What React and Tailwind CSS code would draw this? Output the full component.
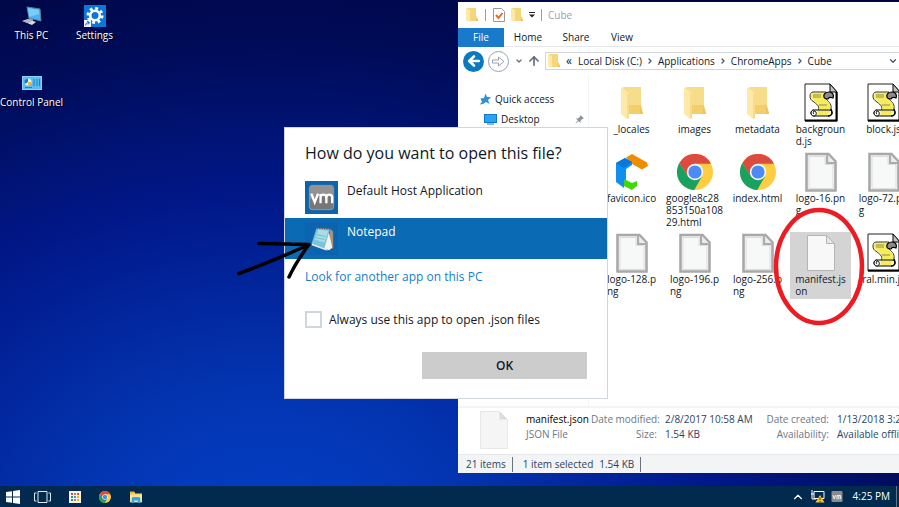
import {
  ArrowLeft,
  ArrowUp,
  ChevronDown,
  ChevronRight,
  ChevronUp,
} from "lucide-react";

function FolderIcon({ className }) {
  return (
    <svg viewBox="0 0 24 34" className={className}>
      <path d="M3 1h18v18l2 8v1H3z" fill="#f3cf6c" />
      <path d="M3 1h18v18H5z" fill="#f7dc8a" />
      <path d="M20 19l3 9h-3z" fill="#eec45a" />
      <path d="M1 1l8 6v25l-2 1-6-5z" fill="#ffe9a9" />
      <path d="M9 7v25l-2 1V8z" fill="#f8dc8c" />
    </svg>
  );
}

function SmallFolderIcon({ className }) {
  return (
    <svg viewBox="0 0 12 14" className={className}>
      <path d="M1 0h9v9l2 3v1H1z" fill="#f6d67c" />
      <path d="M10 8l2 4v1h-2z" fill="#ecc25a" />
      <path d="M0 0l4 2v11l-1 1-3-2z" fill="#ffe9a9" />
    </svg>
  );
}

function ScriptIcon({ className }) {
  return (
    <svg viewBox="0 0 34 39" className={className}>
      <path d="M1 1h25l7 8v29H1z" fill="#fff" stroke="#222" />
      <path d="M32.500 9v28.500H1" fill="none" stroke="#000" strokeWidth="2" />
      <path d="M26 1v8h7z" fill="#c4c4c4" stroke="#000" />
      <path
        d="M9 9h13c-2 2-3 4-1 6 3 3 7 6 6 10 0 2-1 3-2 4l-11-1c2-4 0-6-4-9-3-2-4-3-4-6 0-2 1-4 3-4z"
        fill="#fdf9a8"
        stroke="#333"
        strokeWidth="1"
      />
      <path
        d="M8 11h12M7 13h12M8 15h12M10 17h12M12 19h12M14 21h12M15 23h11M15 25h11"
        stroke="#f0de10"
        strokeWidth="1.200"
      />
      <path d="M9 12h8M9 14h8M15 22h8" stroke="#7a7440" strokeWidth=".8" />
      <path d="M20 14c-1-3 2-5 5-5 4 0 5 3 4 6-2-1-4-1-5 1-2 0-4-1-4-2z" fill="#8b8b8b" stroke="#000" strokeWidth="1.200" />
      <path d="M10 27h15c4 0 4 6 0 6H10c-4 0-4-6 0-6z" fill="#fdf9a8" stroke="#000" />
      <path d="M14 29h11M14 31h10" stroke="#f0de10" strokeWidth="1.200" />
      <path d="M10 27c-4 0-4 6 0 6 3 0 3-5 0-5-1 0-1 3 0 3" fill="#fff" stroke="#000" />
      <path d="M24 33c4 0 5-3 3-7" fill="none" stroke="#000" strokeWidth="1.500" />
    </svg>
  );
}

function ImageFileIcon({ className }) {
  return (
    <svg viewBox="0 0 34 40" className={className}>
      <path d="M2.500 2h22l7 7.500v29h-29z" fill="#f7f8f8" stroke="#a8a8a8" strokeWidth="2.600" />
      <path d="M23 2v9h8.500" fill="#ececec" stroke="#acacac" strokeWidth="2.200" />
      <path d="M5 4.500h16v8h8v24H5z" fill="none" stroke="#dcdcdc" />
    </svg>
  );
}

function BlankFileIcon({ className }) {
  return (
    <svg viewBox="0 0 28 36" className={className}>
      <path d="M.5.5h19l8 8v27H.5z" fill="#f8f8f8" stroke="#b4b4b4" />
      <path d="M19.500.5v8h8z" fill="#e6e6e6" stroke="#b4b4b4" />
    </svg>
  );
}

function ChromeIcon({ className }) {
  return (
    <svg viewBox="0 0 48 48" className={className}>
      <circle cx="24" cy="24" r="24" fill="#ffcd42" />
      <path d="M24 13h21.400A24 24 0 0 0 3.200 12l11 18z" fill="#dc4b3e" />
      <path d="M3.200 12A24 24 0 0 0 23 48l10.500-18.500L24 34 14.500 30z" fill="#19a15f" />
      <circle cx="24" cy="24" r="11" fill="#f3f6fb" />
      <circle cx="24" cy="24" r="8.800" fill="#4c8bf5" />
    </svg>
  );
}

function CubeIcon({ className }) {
  return (
    <svg viewBox="0 0 34 38" className={className}>
      <path d="M11 4.500l6-3.500 15 8.500 1 3.500-6 3.500-9-5z" fill="#f08c00" />
      <path d="M1 10l9-5 7 4v3l-6 4v11l-2 2v6l-8-6z" fill="#0f8ff0" />
      <path d="M1 10l9-5 7 4-8 6z" fill="#0878dc" />
      <path d="M9 26l8 4 5-2v5l-5 4-8-4z" fill="#3fd80a" />
    </svg>
  );
}

function VmIcon({ className }) {
  return (
    <svg viewBox="0 0 34 34" className={className}>
      <rect width="34" height="34" fill="#0a64b0" />
      <rect x="4.500" y="4.500" width="25" height="25" rx="3" fill="#777" stroke="#9a9a9a" />
      <path d="M5 7q0-2 2-2h20q2 0 2 2v7q-12 0-24 5z" fill="#929292" />
      <path
        d="M6.500 13l3.500 9 3.500-9M16 23v-9.500M16 17q0-3 3-3t3 3v6M22 17q0-3 3-3t3 3v6"
        fill="none"
        stroke="#fff"
        strokeWidth="2.400"
      />
    </svg>
  );
}

function NotepadIcon({ className }) {
  return (
    <svg viewBox="0 0 34 34" className={className}>
      <rect width="34" height="34" fill="#0a64b0" />
      <path d="M26 7l3 3v17l-6 2z" fill="#a8927c" />
      <path d="M24 8l4 18-3 3-6-2z" fill="#f4f2ec" />
      <path d="M12 6l14 1-6 20-13-5z" fill="#7cc4de" />
      <path d="M14 8l10 1-4 12-10-3z" fill="#a8dcea" />
      <path d="M7 22l13 5 4 2-3 0-14-5z" fill="#e8ecec" />
      <path d="M12 6l14 1" stroke="#5d5350" strokeWidth="2" strokeDasharray="1.500 1" />
      <path d="M12 13l9 2M11 16l9 2" stroke="#73bdb0" />
    </svg>
  );
}

function PcIcon({ className }) {
  return (
    <svg viewBox="0 0 22 20" className={className}>
      <path d="M6 1l13 2 1 12-12-3z" fill="#45b4f4" stroke="#5b7f98" />
      <path d="M7 2l11 2v4L8 11z" fill="#78ccfa" />
      <path d="M1 15l6-2 8 3-4 3z" fill="#d6dbe0" />
      <path d="M8 12l4 1v2l-5-1z" fill="#8fa2b0" />
      <path d="M3 15l5 2M5 14l5 2" stroke="#7b858d" strokeWidth=".7" />
    </svg>
  );
}

function SettingsIcon({ className }) {
  return (
    <svg viewBox="0 0 22 22" className={className}>
      <rect width="22" height="22" fill="#0a78d8" />
      <circle cx="11" cy="10.500" r="7" fill="none" stroke="#fff" strokeWidth="3" strokeDasharray="2.750 2.750" />
      <circle cx="11" cy="10.500" r="4.800" fill="none" stroke="#fff" strokeWidth="2.600" />
      <rect y="15" width="7" height="7" fill="#f0f4f8" />
      <path d="M1.500 20.500q0-3 3.500-3M3 16l2.500 1.500L4 19.500" fill="none" stroke="#1569b4" />
    </svg>
  );
}

function ControlPanelIcon({ className }) {
  return (
    <svg viewBox="0 0 20 14" className={className}>
      <rect x=".5" y=".5" width="19" height="13" fill="#58bdf0" stroke="#8fd2f5" />
      <circle cx="6" cy="6" r="3.500" fill="#e8f6fd" />
      <path d="M6 6V2.500A3.500 3.500 0 0 0 3 8z" fill="#1a79c4" />
      <path d="M6 6h3.500A3.500 3.500 0 0 1 6 9.500z" fill="#f0b23c" />
      <path d="M12 3v7M15 3v7M17.500 3v7M3 11.500h7" stroke="#1f80c8" />
    </svg>
  );
}

function ExplorerIcon({ className }) {
  return (
    <svg viewBox="0 0 16 14" className={className}>
      <path d="M1 1h5l1 2h8v10H1z" fill="#f7d774" />
      <path d="M1 1h5l1 2H1z" fill="#e8b93c" />
      <path d="M1 5h14v8H1z" fill="#fce69a" />
      <path d="M3 14V9q0-2 2-2h6q2 0 2 2v5h-3v-3H6v3z" fill="#35a3ea" />
    </svg>
  );
}

const DESKTOP_ITEMS = [
  { name: "This PC", icon: <PcIcon className="h-5 w-6" /> },
  { name: "Settings", icon: <SettingsIcon className="size-[22px]" /> },
  { name: "Control Panel", icon: <ControlPanelIcon className="h-[14px] w-5" /> },
];

const FILES = [
  { name: "_locales", type: "folder" },
  { name: "images", type: "folder" },
  { name: "metadata", type: "folder" },
  { name: "backgroun\nd.js", type: "script" },
  { name: "block.js", type: "script" },
  { name: "favicon.ico", type: "cube" },
  { name: "google8c28\n853150a108\n29.html", type: "chrome" },
  { name: "index.html", type: "chrome" },
  { name: "logo-16.pn\ng", type: "image" },
  { name: "logo-72.pn\ng", type: "image" },
  { name: "logo-128.p\nng", type: "image" },
  { name: "logo-196.p\nng", type: "image" },
  { name: "logo-256.p\nng", type: "image" },
  { name: "manifest.js\non", type: "blank", selected: true },
  { name: "ral.min.js", type: "script" },
];

const FILE_ICONS = {
  folder: <FolderIcon className="h-[34px] w-6" />,
  script: <ScriptIcon className="h-[39px] w-[34px]" />,
  image: <ImageFileIcon className="h-10 w-[34px]" />,
  blank: <BlankFileIcon className="h-9 w-7" />,
  chrome: <ChromeIcon className="size-9" />,
  cube: <CubeIcon className="h-[38px] w-[34px]" />,
};

const PATH = ["Local Disk (C:)", "Applications", "ChromeApps", "Cube"];

function DesktopIcons() {
  return (
    <div className="grid w-[126px] grid-cols-2 gap-y-5 pt-1">
      {DESKTOP_ITEMS.map((item) => (
        <button
          key={item.name}
          className="flex h-[47px] flex-col items-center justify-start whitespace-nowrap text-[10px] leading-4 text-white [text-shadow:1px_1px_1px_#000]"
        >
          <span className="flex h-[23px] items-center justify-center">{item.icon}</span>
          {item.name}
        </button>
      ))}
    </div>
  );
}

function TitleBar() {
  return (
    <header className="flex h-[26px] items-center gap-1.5 pl-2 text-gray-400">
      <SmallFolderIcon className="h-[14px] w-3" />
      <span className="mx-px h-3 w-px bg-gray-400" />
      <svg viewBox="0 0 12 14" className="h-[14px] w-3">
        <path d="M.5.5h8l3 3v10H.5z" fill="#fff" stroke="#999" />
        <path d="M3 7l2.500 3L9.500 5" fill="none" stroke="#e36c2c" strokeWidth="2" />
      </svg>
      <SmallFolderIcon className="h-[14px] w-3" />
      <svg viewBox="0 0 6 6" className="size-[6px]">
        <path d="M0 .5h6" stroke="#222" />
        <path d="M0 2.500h6l-3 3z" fill="#222" />
      </svg>
      <span className="h-3 w-px bg-gray-400" />
      <h1>Cube</h1>
    </header>
  );
}

function AddressBar() {
  return (
    <div className="flex h-7 items-center pl-[5px]">
      <button aria-label="Back" className="flex size-[21px] items-center justify-center rounded-full bg-[#0a7abf] text-white">
        <ArrowLeft className="size-4" strokeWidth={4} />
      </button>
      <button aria-label="Forward" className="ml-1 flex size-[21px] items-center justify-center rounded-full border border-gray-400 text-gray-400">
        <svg viewBox="0 0 13 11" className="h-[11px] w-[13px]" fill="none" stroke="currentColor">
          <path d="M.5 4h6V1L12 5.500 6.500 10V7h-6z" />
        </svg>
      </button>
      <button aria-label="Recent locations" className="ml-1.5 text-gray-500">
        <ChevronDown className="size-2" strokeWidth={4} />
      </button>
      <button aria-label="Up" className="ml-1 text-gray-500">
        <ArrowUp className="size-[14px]" strokeWidth={3} />
      </button>
      <nav className="ml-1 flex h-[18px] flex-1 items-center border border-gray-300 pl-0.5">
        <SmallFolderIcon className="h-[14px] w-3" />
        <span className="mx-1.5 text-xs leading-3">«</span>
        {PATH.map((part, i) => (
          <div key={part} className="flex items-center">
            {i > 0 && <ChevronRight className="mx-1 size-2 text-gray-600" strokeWidth={4} />}
            <button className="whitespace-nowrap">{part}</button>
          </div>
        ))}
        <ChevronDown className="mr-7 ml-auto size-[10px] text-gray-600" strokeWidth={3} />
      </nav>
    </div>
  );
}

function FileGrid() {
  return (
    <ul className="grid content-start grid-cols-[repeat(5,63px)] gap-y-1 pt-[7px] pl-[11px]">
      {FILES.map((file) => (
        <li key={file.name} className="flex items-start justify-center">
          <button
            className={`flex w-[61px] flex-col items-center justify-start ${
              file.selected ? "bg-[#d4d4d4] pb-0.5" : ""
            }`}
          >
            <span className="flex h-[41px] items-center justify-center">
              {FILE_ICONS[file.type]}
            </span>
            <span className="text-left leading-3 whitespace-pre">{file.name}</span>
          </button>
        </li>
      ))}
    </ul>
  );
}

function DetailsPane() {
  return (
    <section className="flex h-12 items-start border-t-2 border-gray-100 pt-[3px] pl-[22px] leading-[15px] whitespace-nowrap text-[#6b7687]">
      <svg viewBox="0 0 28 38" className="h-[38px] w-7 shrink-0">
        <path d="M.5.5h19l8 8v29H.5z" fill="#f5f5f5" stroke="#e8e8e8" />
        <path d="M19.500.5v8h8z" fill="#dcdcdc" />
      </svg>
      <div className="ml-[18px] w-[65px] shrink-0 pt-px">
        <p className="text-black">manifest.json</p>
        <p>JSON File</p>
      </div>
      <dl className="grid shrink-0 grid-cols-[66px_92px_64px_80px] gap-x-2 pt-px">
        <dt className="text-right">Date modified:</dt>
        <dd className="text-[#2a4365]">2/8/2017 10:58 AM</dd>
        <dt className="text-right">Date created:</dt>
        <dd className="text-[#2a4365]">1/13/2018 3:23 PM</dd>
        <dt className="text-right">Size:</dt>
        <dd className="text-[#2a4365]">1.54 KB</dd>
        <dt className="text-right">Availability:</dt>
        <dd className="text-[#2a4365]">Available offline</dd>
      </dl>
    </section>
  );
}

function ExplorerWindow() {
  return (
    <section className="absolute top-0.5 -right-7 bottom-[13px] left-[458px] flex flex-col overflow-hidden bg-white text-[10px] text-gray-900">
      <TitleBar />
      <div className="flex h-[19px] items-center border-b border-gray-200">
        <button className="h-[19px] w-[46px] bg-[#1979ca] text-white">File</button>
        <button className="w-12">Home</button>
        <button className="w-12">Share</button>
        <button className="w-11">View</button>
      </div>
      <AddressBar />
      <div className="flex flex-1">
        <aside className="flex w-[131px] flex-col gap-1 border-r border-gray-100 pt-4 pl-[21px] leading-4">
          <a href="#quick" className="flex items-center gap-1">
            <svg viewBox="0 0 24 24" className="size-3">
              <path d="M13 1l3 7 8 0-6 6 3 8-7-4-6 4-7 1 5-5-3-7 7-1z" fill="#2f8fd8" />
            </svg>
            Quick access
          </a>
          <a href="#desktop" className="flex items-center gap-1 pl-[5px]">
            <svg viewBox="0 0 13 11" className="h-[11px] w-[13px]">
              <rect x=".5" y=".5" width="12" height="8" fill="#29a3f2" stroke="#0f78c8" />
              <path d="M3 10h7" stroke="#0f78c8" />
            </svg>
            Desktop
            <svg viewBox="0 0 10 10" className="mr-1 ml-auto size-[9px]">
              <path d="M6 0l4 4-2 .5L6 7v2L1 4h2l2.500-2zM3 6L0 10l4-3z" fill="#8d959c" />
            </svg>
          </a>
        </aside>
        <FileGrid />
      </div>
      <DetailsPane />
      <footer className="flex h-[19px] items-center gap-1.5 border-t border-gray-200 bg-gray-100 pl-2 text-[#2a4365]">
        <span>21 items</span>
        <span className="h-[15px] w-px bg-gray-500" />
        <span className="ml-1">1 item selected</span>
        <span>1.54 KB</span>
        <span className="h-[15px] w-px bg-gray-500" />
      </footer>
    </section>
  );
}

function OpenWithDialog() {
  return (
    <section
      role="dialog"
      aria-labelledby="open-with-title"
      className="absolute top-[127px] left-[284px] w-[324px] border border-gray-300 bg-white pb-[19px] text-xs text-gray-900"
    >
      <h2 id="open-with-title" className="px-5 pt-[13px] pb-3 text-base leading-6">
        How do you want to open this file?
      </h2>
      <button className="flex h-[41px] w-full items-center gap-[9px] px-5">
        <VmIcon className="size-[33px]" />
        <span className="pb-[14px]">Default Host Application</span>
      </button>
      <button className="flex h-[41px] w-full items-center gap-[9px] bg-[#0a6ab4] px-5 text-white">
        <NotepadIcon className="size-[33px]" />
        <span className="pb-[14px]">Notepad</span>
      </button>
      <div className="flex flex-col items-start px-5 pt-2">
        <a href="#more" className="leading-5 text-[#1480d0]">
          Look for another app on this PC
        </a>
        <label className="mt-6 flex items-center gap-[7px]">
          <input type="checkbox" className="size-[17px] appearance-none border-2 border-gray-300 bg-white" />
          Always use this app to open .json files
        </label>
        <button className="mt-6 h-[27px] w-[165px] self-end bg-[#cccccc] font-semibold">OK</button>
      </div>
    </section>
  );
}

function Taskbar() {
  return (
    <footer className="flex h-[21px] items-center bg-[#012a4e] px-1.5 text-[10px] text-white">
      <div className="flex items-center gap-[18px]">
        <button aria-label="Start">
          <svg viewBox="0 0 14 14" className="size-[14px]" fill="#fff">
            <path d="M0 2l6-.8v5.300H0zM7 1l7-1v6.500H7zM0 7.500h6v5.300L0 12zM7 7.500h7V14l-7-1z" />
          </svg>
        </button>
        <button aria-label="Task View" className="-ml-1">
          <svg viewBox="0 0 17 12" className="h-3 w-[17px]" fill="none" stroke="#dfe8f0">
            <path d="M4 .5h9v11H4zM2.500 2H.5v8h2M14.500 2h2v8h-2" />
          </svg>
        </button>
        <button aria-label="Apps">
          <svg viewBox="0 0 12 12" className="size-3">
            <rect width="12" height="12" fill="#f5f3ee" />
            <path d="M2 3h2M8 3h2" stroke="#dc4b3e" strokeWidth="2" />
            <path d="M5 3h2M5 9h2" stroke="#e27050" strokeWidth="2" />
            <path d="M2 6h2M2 9h2" stroke="#19a15f" strokeWidth="2" />
            <path d="M5 6h2" stroke="#4c8bf5" strokeWidth="2" />
            <path d="M8 6h2M8 9h2" stroke="#f2b90c" strokeWidth="2" />
          </svg>
        </button>
        <button aria-label="Chrome">
          <ChromeIcon className="size-3" />
        </button>
        <button aria-label="File Explorer">
          <ExplorerIcon className="h-3 w-[14px]" />
        </button>
      </div>
      <div className="ml-auto flex items-center gap-1.5">
        <button aria-label="Show hidden icons">
          <ChevronUp className="size-[14px]" strokeWidth={2} />
        </button>
        <svg viewBox="0 0 14 13" className="h-[13px] w-[14px]">
          <path d="M3 1.500h10v7H3zM1 0v4M0 4h3M1 4v5h4" fill="none" stroke="#fff" />
          <path d="M9 5l4.500 7.500h-9z" fill="#f8c030" />
          <path d="M9 7.500v2.500M9 11v1" stroke="#5a3900" />
        </svg>
        <svg viewBox="0 0 12 12" className="h-[11px] w-3">
          <rect width="12" height="12" rx="1" fill="#8b8b8b" />
          <path d="M1.500 4.500l1.500 4 1.500-4M6 9V5h2v4M8 5h2v4" fill="none" stroke="#fff" />
        </svg>
        <time className="ml-1 whitespace-nowrap">4:25 PM</time>
      </div>
      <button aria-label="Show desktop" className="-mr-1.5 ml-1.5 h-[21px] w-[3px] border-l border-gray-500" />
    </footer>
  );
}

function Annotations() {
  return (
    <>
      <svg
        viewBox="0 0 76 40"
        className="pointer-events-none absolute top-[240px] left-[236px] h-10 w-[76px]"
        fill="none"
        stroke="#000"
        strokeWidth="3.500"
        strokeLinecap="round"
      >
        <path d="M3 33.500Q35 22 73 4.500M23 3.500L73 4.500M53 37Q60 22 73 4.500" />
      </svg>
      <svg
        viewBox="0 0 92 120"
        className="pointer-events-none absolute top-[207px] left-[773px] h-[120px] w-[92px]"
      >
        <ellipse cx="46" cy="59.500" rx="43" ry="56.500" fill="none" stroke="#ed1c24" strokeWidth="4.500" />
      </svg>
    </>
  );
}

export default function App() {
  return (
    <div className="flex h-screen flex-col overflow-hidden font-['Open_Sans',sans-serif]">
      <main className="relative flex-1 bg-[radial-gradient(ellipse_90%_125%_at_30%_110%,#0440c8_0%,#0334b0_25%,#01188a_55%,#000c5a_80%,#000640_100%)]">
        <DesktopIcons />
        <ExplorerWindow />
        <OpenWithDialog />
        <Annotations />
      </main>
      <Taskbar />
    </div>
  );
}
